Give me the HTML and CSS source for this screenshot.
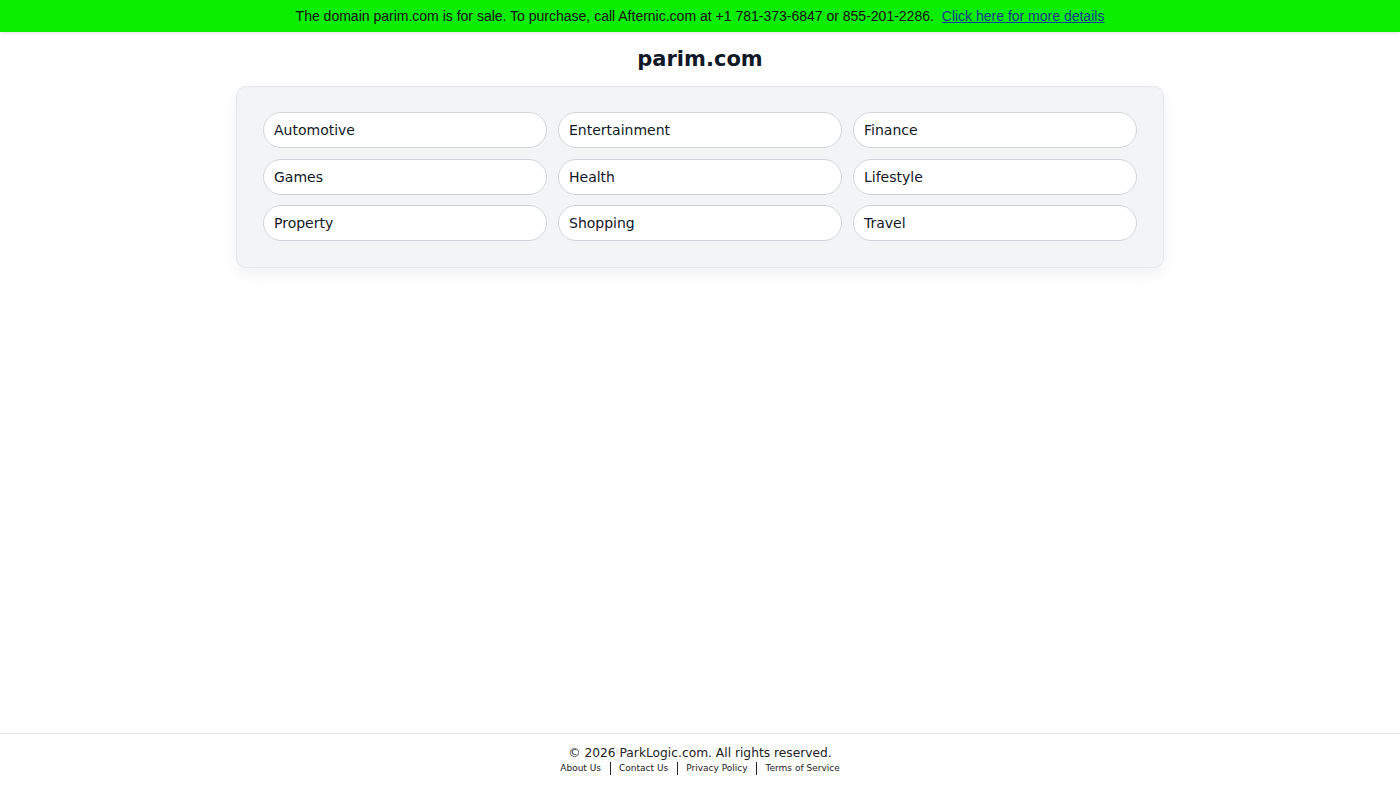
FILE: index.html
```html
<!DOCTYPE html>
<html lang="en">
<head>
<meta charset="utf-8">
<title>parim.com</title>
<link rel="stylesheet" href="styles.css">
</head>
<body>
<div class="page">
  <div class="banner">
    The domain parim.com is for sale. To purchase, call Afternic.com at +1 781-373-6847 or 855-201-2286.&nbsp;
    <a href="#" class="banner-link">Click here for more details</a>
  </div>
  <main class="main">
    <h1 class="title">parim.com</h1>
    <div class="card">
      <div class="grid">
        <a href="#" class="pill">Automotive</a>
        <a href="#" class="pill">Entertainment</a>
        <a href="#" class="pill">Finance</a>
        <a href="#" class="pill">Games</a>
        <a href="#" class="pill">Health</a>
        <a href="#" class="pill">Lifestyle</a>
        <a href="#" class="pill">Property</a>
        <a href="#" class="pill">Shopping</a>
        <a href="#" class="pill">Travel</a>
      </div>
    </div>
  </main>
  <footer class="footer">
    <div class="copy">© 2026 ParkLogic.com. All rights reserved.</div>
    <div class="links">
      <a href="#" class="flink">About Us</a>
      <span class="sep"></span>
      <a href="#" class="flink">Contact Us</a>
      <span class="sep"></span>
      <a href="#" class="flink">Privacy Policy</a>
      <span class="sep"></span>
      <a href="#" class="flink">Terms of Service</a>
    </div>
  </footer>
</div>
</body>
</html>
```

FILE: styles.css
```css
* { box-sizing: border-box; }
html, body { margin: 0; padding: 0; }
body {
  font-family: "DejaVu Sans", sans-serif;
  color: #111827;
  background: #ffffff;
}
.page {
  min-height: 100vh;
  display: flex;
  flex-direction: column;
}
.banner {
  height: 32px;
  flex-shrink: 0;
  background: #0aee00;
  box-shadow: 0 1px 3px rgba(0, 0, 0, 0.12);
  display: flex;
  align-items: center;
  justify-content: center;
  font-family: "Liberation Sans", Arial, sans-serif;
  font-size: 14px;
  color: #111111;
  white-space: nowrap;
}
.banner-link {
  color: #0a3d8f;
  text-decoration: underline;
  margin-left: 4px;
}
.main {
  flex: 1;
  display: flex;
  flex-direction: column;
  align-items: center;
}
.title {
  margin: 13px 0 13px;
  font-size: 21px;
  line-height: 28px;
  font-weight: bold;
  color: #111827;
}
.card {
  width: 928px;
  background: #f3f4f6;
  border: 1px solid #e5e7eb;
  border-radius: 10px;
  padding: 25px 26px 26px;
  box-shadow: 0 6px 16px rgba(0, 0, 0, 0.06);
}
.grid {
  display: grid;
  grid-template-columns: repeat(3, 1fr);
  column-gap: 11px;
  row-gap: 10.5px;
}
.pill {
  display: flex;
  align-items: center;
  height: 36px;
  padding: 0 10px;
  background: #ffffff;
  border: 1px solid #d1d5db;
  border-radius: 9999px;
  font-size: 14px;
  color: #111827;
  text-decoration: none;
}
.footer {
  border-top: 1px solid #e5e7eb;
  padding: 11px 0 13px;
  display: flex;
  flex-direction: column;
  align-items: center;
  color: #222222;
}
.copy {
  font-size: 12.25px;
  line-height: 16px;
}
.links {
  display: flex;
  align-items: center;
  font-size: 9px;
  line-height: 14px;
}
.flink {
  color: #222222;
  text-decoration: none;
}
.sep {
  width: 1px;
  height: 13px;
  background: #222222;
  margin: 0 8.5px;
}
```
